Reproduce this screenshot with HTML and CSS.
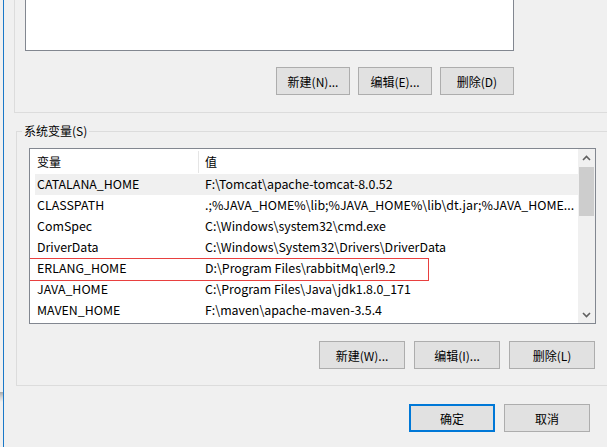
FILE: index.html
```html
<!DOCTYPE html>
<html lang="zh-CN">

<head>
  <meta charset="UTF-8">
  <meta name="viewport" content="width=device-width, initial-scale=1.0">
  <title>环境变量</title>
  <link rel="stylesheet" href="styles.css">
</head>

<body>

  <div class="screen">
    <div class="screen__edge"></div>

    <div class="dialog">

      <!-- user variables, mostly scrolled off the top -->
      <div class="group group--user">
        <div class="listbox listbox--user"></div>
        <div class="buttons buttons--user">
          <button type="button" class="btn btn--small">新建(N)...</button>
          <button type="button" class="btn btn--small">编辑(E)...</button>
          <button type="button" class="btn btn--small">删除(D)</button>
        </div>
      </div>

      <fieldset class="group group--system">
        <legend>系统变量(S)</legend>

        <div class="listbox listbox--system">
          <div class="list">
            <div class="list__head">
              <span class="list__name">变量</span>
              <span class="list__value">值</span>
            </div>
            <div class="list__row is-selected">
              <span class="list__name">CATALANA_HOME</span>
              <span class="list__value">F:\Tomcat\apache-tomcat-8.0.52</span>
            </div>
            <div class="list__row">
              <span class="list__name">CLASSPATH</span>
              <span class="list__value">.;%JAVA_HOME%\lib;%JAVA_HOME%\lib\dt.jar;%JAVA_HOME...</span>
            </div>
            <div class="list__row">
              <span class="list__name">ComSpec</span>
              <span class="list__value">C:\Windows\system32\cmd.exe</span>
            </div>
            <div class="list__row">
              <span class="list__name">DriverData</span>
              <span class="list__value">C:\Windows\System32\Drivers\DriverData</span>
            </div>
            <div class="list__row">
              <span class="list__name">ERLANG_HOME</span>
              <span class="list__value">D:\Program Files\rabbitMq\erl9.2</span>
              <span class="mark"></span>
            </div>
            <div class="list__row">
              <span class="list__name">JAVA_HOME</span>
              <span class="list__value">C:\Program Files\Java\jdk1.8.0_171</span>
            </div>
            <div class="list__row">
              <span class="list__name">MAVEN_HOME</span>
              <span class="list__value">F:\maven\apache-maven-3.5.4</span>
            </div>
          </div>

          <div class="scrollbar">
            <div class="scrollbar__arrow">
              <svg width="9" height="6" viewBox="0 0 9 6"><path d="M1 5 L4.5 1.5 L8 5" fill="none" stroke="#606060" stroke-width="1.6"/></svg>
            </div>
            <div class="scrollbar__thumb"></div>
            <div class="scrollbar__track"></div>
            <div class="scrollbar__arrow">
              <svg width="9" height="6" viewBox="0 0 9 6"><path d="M1 1 L4.5 4.5 L8 1" fill="none" stroke="#606060" stroke-width="1.6"/></svg>
            </div>
          </div>
        </div>

        <div class="buttons buttons--system">
          <button type="button" class="btn">新建(W)...</button>
          <button type="button" class="btn">编辑(I)...</button>
          <button type="button" class="btn">删除(L)</button>
        </div>
      </fieldset>

      <div class="buttons buttons--dialog">
        <button type="button" class="btn btn--default">确定</button>
        <button type="button" class="btn">取消</button>
      </div>

    </div>
  </div>

</body>

</html>
```

FILE: styles.css
```css
:root {
  --clr-dialog: #f0f0f0;
  --clr-white: #ffffff;
  --clr-text: #000000;
  --clr-group: #dcdcdc;
  --clr-list-border: #828790;
  --clr-btn: #e1e1e1;
  --clr-btn-border: #adadad;
  --clr-accent: #0078d7;
  --clr-edge: #1a78c8;
  --clr-mark: #e8403f;

  --fnt-main: "Noto Sans CJK SC", "Noto Sans", sans-serif;
}

* {
  box-sizing: border-box;
  margin: 0;
  padding: 0;
}

body {
  font-family: var(--fnt-main);
  font-size: 12px;
  color: var(--clr-text);
  background-color: var(--clr-dialog);
}

.screen {
  display: flex;
  width: 607px;
  height: 447px;
  overflow: hidden;
  background-color: var(--clr-dialog);
}

.screen__edge {
  flex: 0 0 3px;
  background: linear-gradient(to bottom,
      var(--clr-dialog) 0 392px,
      #a9a9a9 392px,
      #d4d4d4 397px,
      var(--clr-dialog) 402px);
}

.dialog {
  flex: 1;
  min-width: 0;
  border-left: 1px solid var(--clr-edge);
}

/* group boxes */

.group {
  border: 1px solid var(--clr-group);
  margin-right: -40px;
}

.group--user {
  margin: -40px -40px 0 10px;
  padding: 9px 0 17px 10px;
}

.group--system {
  margin: 10px -40px 0 12px;
  padding: 0 0 16px 0;
  min-width: 0;
}

.group--system legend {
  margin-left: 5px;
  padding: 0 2px;
  line-height: 16px;
}

/* list boxes */

.listbox {
  border: 1px solid var(--clr-list-border);
  background-color: var(--clr-white);
}

.listbox--user {
  width: 489px;
  height: 81px;
}

.listbox--system {
  display: flex;
  width: 567px;
  height: 176px;
  margin: 9px 0 0 12px;
  overflow: hidden;
  font-size: 12.4px;
}

.list {
  flex: 1;
  padding-left: 5px;
}

.list__head,
.list__row {
  display: flex;
  white-space: nowrap;
}

.list__head {
  height: 25px;
  padding: 2px 0 1px;
  line-height: 21px;
  font-size: 12px;
}

.list__head .list__name {
  border-right: 1px solid #e5e5e5;
}

.list__row {
  position: relative;
  height: 21px;
  line-height: 20.5px;
}

.list__row.is-selected {
  background-color: var(--clr-dialog);
}

.list__name {
  flex: 0 0 164px;
  padding-left: 2px;
}

.list__value {
  padding-left: 6px;
  overflow: hidden;
}

.mark {
  position: absolute;
  top: 0;
  left: -11px;
  width: 405px;
  height: 23px;
  border: 1px solid var(--clr-mark);
}

.scrollbar {
  display: flex;
  flex-direction: column;
  flex: 0 0 17px;
  background-color: var(--clr-dialog);
}

.scrollbar__arrow {
  display: grid;
  place-items: center;
  height: 17px;
}

.scrollbar__thumb {
  height: 49px;
  margin: 1px 1px 0;
  background-color: #cdcdcd;
}

.scrollbar__track {
  flex: 1;
}

/* buttons */

.buttons {
  display: flex;
  justify-content: flex-end;
}

.buttons--user {
  width: 489px;
  margin-top: 16px;
  gap: 8px;
}

.buttons--system {
  width: 566px;
  margin: 17px 0 0 12px;
  gap: 9px;
}

.buttons--dialog {
  margin-top: 18px;
  padding-right: 17px;
  gap: 9px;
}

.btn {
  width: 86px;
  height: 28px;
  font-family: var(--fnt-main);
  font-size: 12px;
  color: var(--clr-text);
  background-color: var(--clr-btn);
  border: 1px solid var(--clr-btn-border);
}

.btn--small {
  width: 74px;
}

.btn--default {
  border: 2px solid var(--clr-accent);
}
```
